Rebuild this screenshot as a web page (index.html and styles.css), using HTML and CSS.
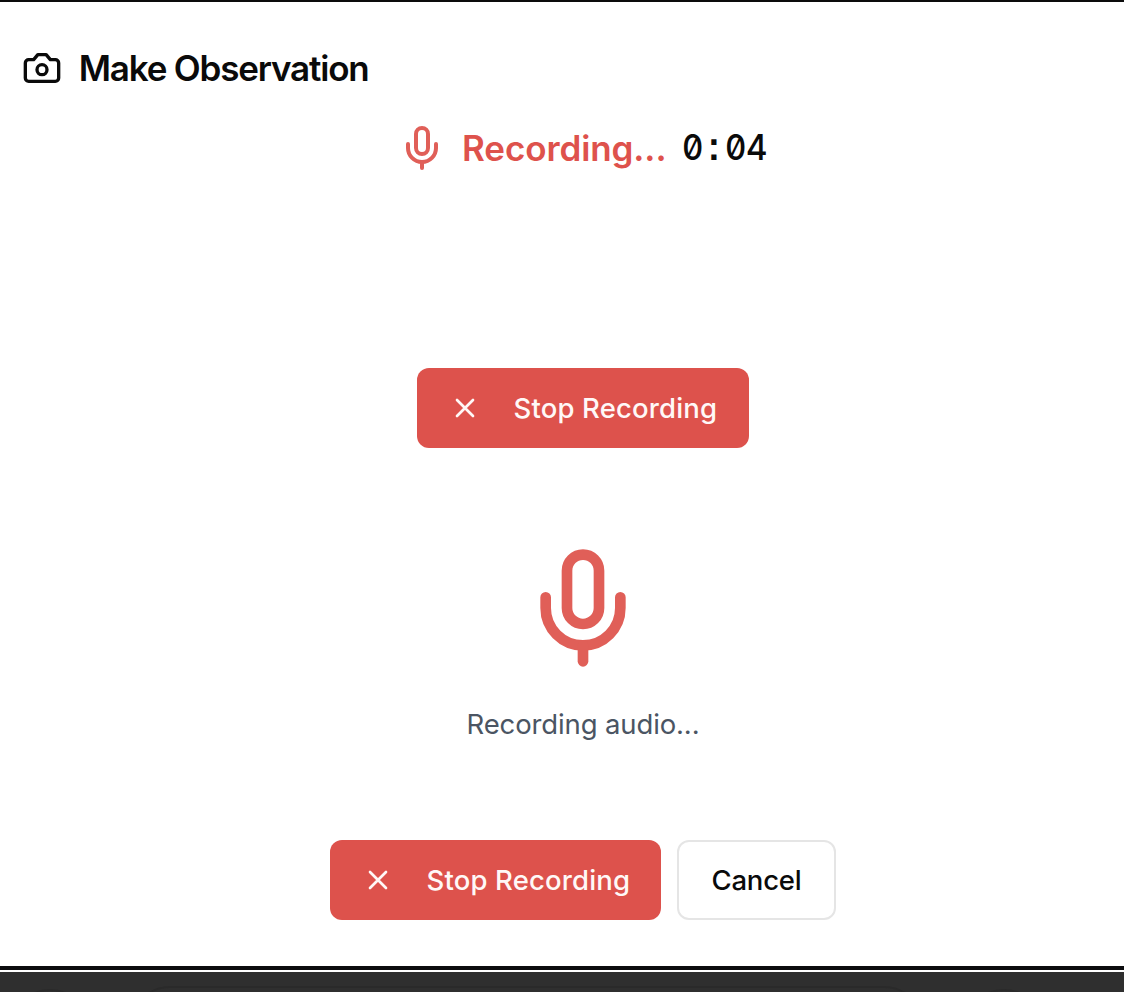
FILE: index.html
```html
<!DOCTYPE html>
<html lang="en">
<head>
<meta charset="utf-8">
<title>Make Observation</title>
<link rel="stylesheet" href="styles.css">
</head>
<body>
<svg class="defs" aria-hidden="true">
  <symbol id="mic" viewBox="0 0 24 24"><path d="M12 2a3 3 0 0 0-3 3v7a3 3 0 0 0 6 0V5a3 3 0 0 0-3-3Z"/><path d="M19 10v2a7 7 0 0 1-14 0v-2"/><path d="M12 19v3"/></symbol>
  <symbol id="x" viewBox="0 0 24 24"><path d="M18 6 6 18M6 6l12 12"/></symbol>
</svg>
<main class="dialog">
  <header class="header">
    <svg class="icon camera" viewBox="0 0 24 24"><path d="M14.5 4h-5L7 7H4a2 2 0 0 0-2 2v9a2 2 0 0 0 2 2h16a2 2 0 0 0 2-2V9a2 2 0 0 0-2-2h-3l-2.5-3z"/><circle cx="12" cy="13" r="3"/></svg>
    <h1 class="title">Make Observation</h1>
  </header>
  <div class="status">
    <svg class="icon mic-small"><use href="#mic"/></svg>
    <span class="status-label">Recording...</span>
    <span class="timer"><span>0</span><span class="colon">:</span><span>0</span><span>4</span></span>
  </div>
  <button class="button stop"><svg class="icon cross"><use href="#x"/></svg><span class="stop-label">Stop Recording</span></button>
  <section class="audio">
    <svg class="icon mic-large"><use href="#mic"/></svg>
    <p class="caption">Recording audio...</p>
  </section>
  <footer class="actions">
    <button class="button stop"><svg class="icon cross"><use href="#x"/></svg><span class="stop-label">Stop Recording</span></button>
    <button class="button cancel"><span class="cancel-label">Cancel</span></button>
  </footer>
</main>
<div class="toolbar">
  <i class="knob"></i><i class="field"></i><i class="knob"></i>
</div>
</body>
</html>
```

FILE: styles.css
```css
* { box-sizing: border-box; }
body { margin: 0; height: 992px; overflow: hidden; background: #fff; color: #0a0a0a; font-family: Inter, sans-serif; }
.defs { display: none; }
.icon { display: block; flex: none; fill: none; stroke: currentColor; stroke-width: 2; stroke-linecap: round; stroke-linejoin: round; }
.dialog { height: 970px; border-top: 2px solid #0c0c0c; border-bottom: 4px solid #0c0c0e; padding: 46px 0 0 22px; display: flex; flex-direction: column; }
.header { display: flex; align-items: center; gap: 16.7px; height: 40px; }
.camera { width: 40px; height: 40px; }
.title { margin: 0; font-size: 35px; line-height: 40px; font-weight: 600; letter-spacing: -1.18px; white-space: nowrap; }
.status { display: flex; align-items: center; height: 48px; margin: 36px 0 0 376px; }
.mic-small { width: 48px; height: 48px; color: #e05f58; }
.status-label { width: 219.5px; margin-left: 16px; font-size: 35px; line-height: 48px; font-weight: 600; letter-spacing: -0.1px; color: #de524c; white-space: nowrap; }
.timer { display: flex; align-items: baseline; font-size: 36px; line-height: 44px; font-weight: 500; font-feature-settings: "zero" 1, "tnum" 1; padding-bottom: 2px; }
.timer span { width: 21.6px; display: flex; justify-content: center; transform: scaleX(.92); }
.timer .colon { font-family: "Liberation Sans", sans-serif; font-size: 40px; font-weight: 700; line-height: 40px; }
.button { display: flex; align-items: center; flex: none; height: 80px; padding: 0; border: 0; border-radius: 12px; font-family: inherit; font-size: 27.5px; line-height: 40px; font-weight: 500; white-space: nowrap; }
.stop { width: 332px; padding-left: 32px; background: #dd524c; color: #fff8f7; }
.cross { width: 32px; height: 32px; }
.stop-label { margin-left: 32.5px; font-weight: 450; letter-spacing: 0.15px; }
.dialog > .stop { margin: 196px 0 0 395px; }
.audio { display: flex; flex-direction: column; align-items: center; width: 332px; margin: 96px 0 0 395px; }
.mic-large { width: 128px; height: 128px; color: #e05f58; }
.caption { margin: 32px 0 0; height: 40px; font-size: 27.5px; line-height: 40px; letter-spacing: -0.13px; color: #4b5563; white-space: nowrap; }
.actions { display: flex; gap: 16px; margin: 96px 0 0 308px; }
.actions .stop { width: 331px; }
.cancel { width: 159px; justify-content: center; border: 2px solid #e5e5e5; background: #fff; color: #0a0a0a; }
.cancel-label { letter-spacing: -0.2px; }
.toolbar { display: flex; align-items: flex-start; height: 20px; margin-top: 2px; padding: 14px 0 0 10px; overflow: hidden; background: #2f2f2f; }
.knob { flex: none; width: 80px; height: 80px; margin-top: 3px; border: 2px solid #2a2a2a; border-radius: 50%; }
.field { flex: none; width: 794px; height: 80px; margin: 0 40px; border: 2px solid #2a2a2a; border-radius: 40px; }
```
